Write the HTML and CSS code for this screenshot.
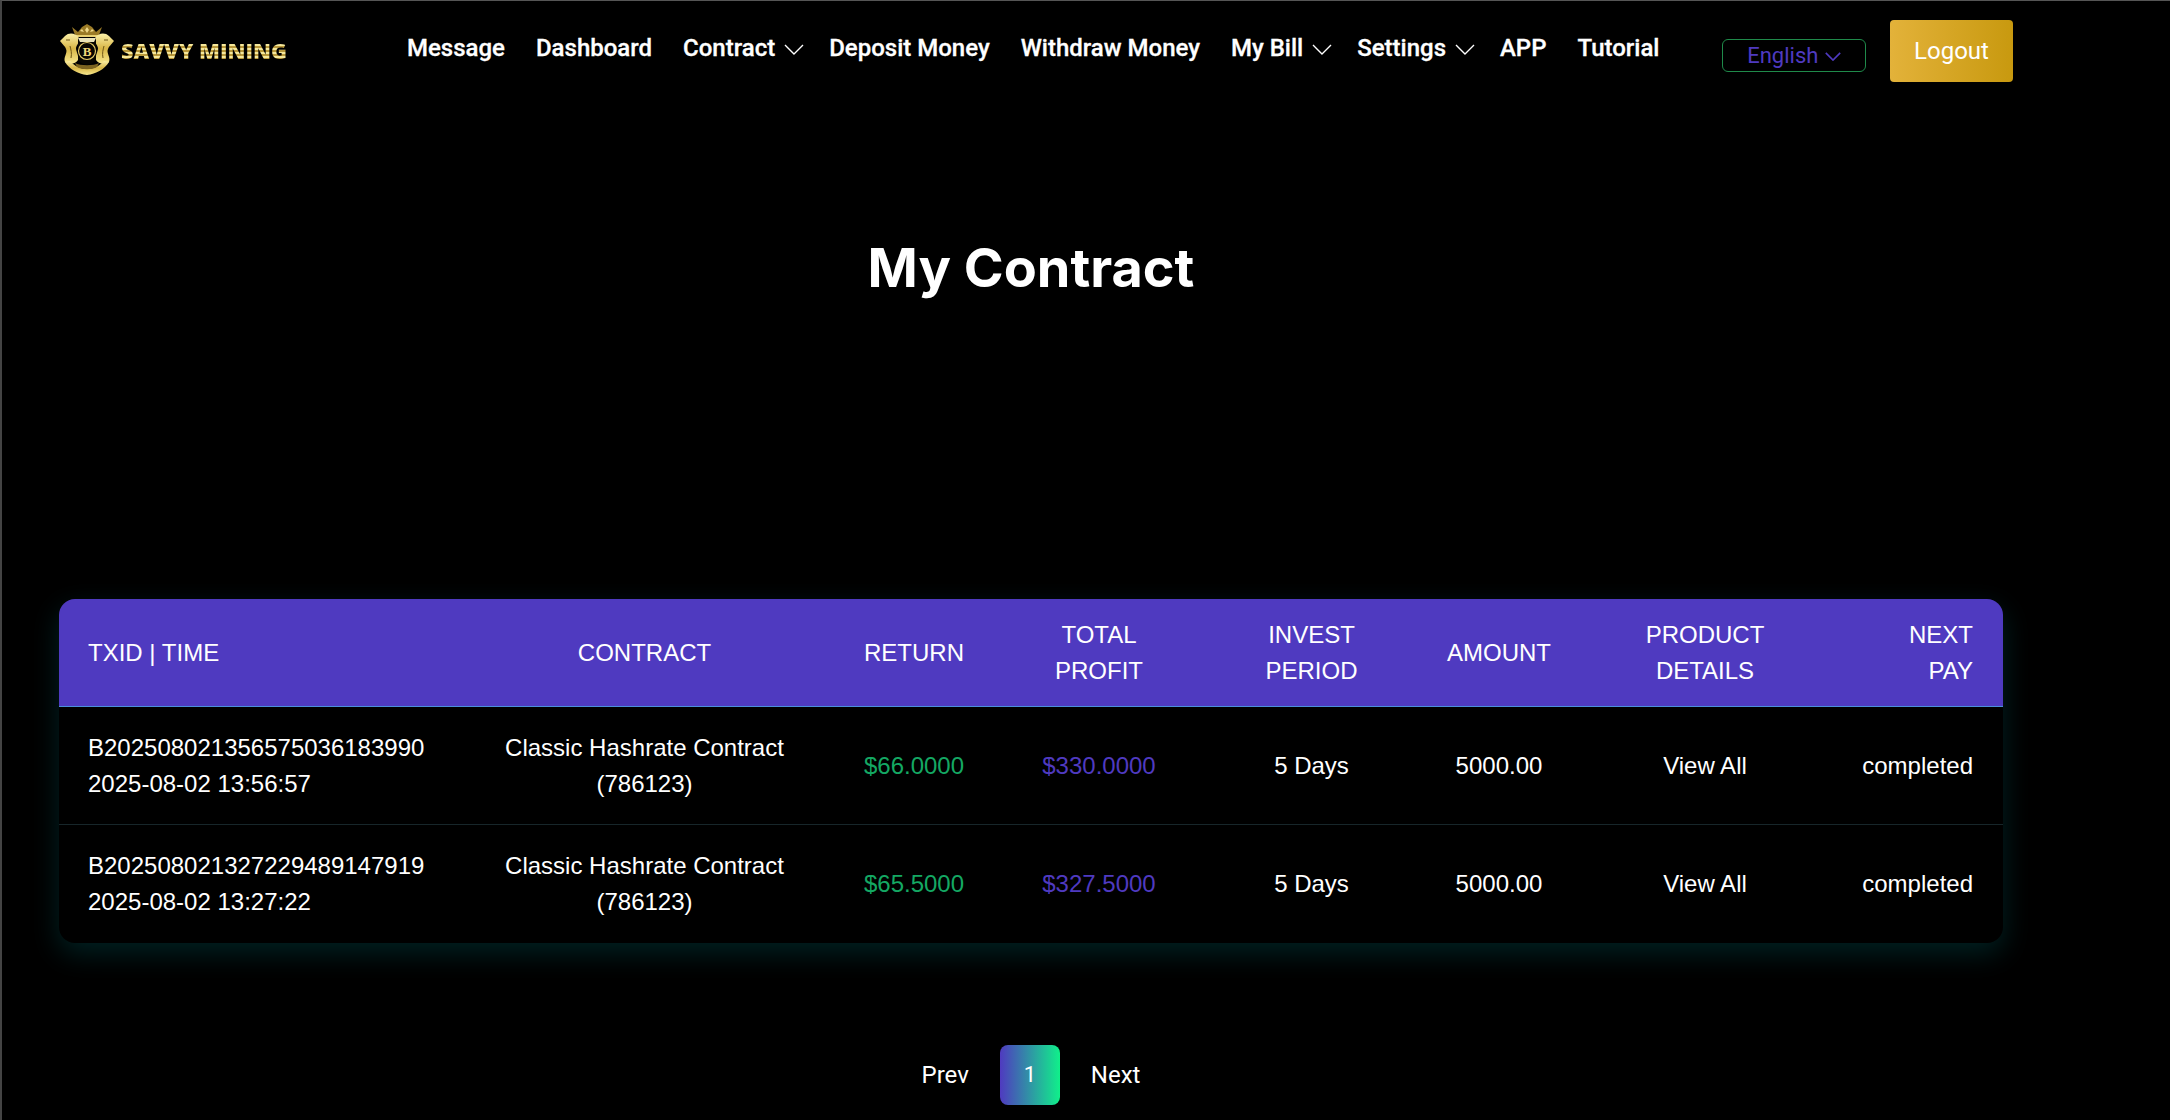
FILE: index.html
```html
<!DOCTYPE html>
<html lang="en">
<head>
    <meta charset="UTF-8">
    <meta name="viewport" content="width=device-width, initial-scale=1.0">
    <title>My Contract</title>
    <link rel="stylesheet" href="styles.css">
</head>
<body>
    <div class="page">
        <header class="header">
            <a class="logo" href="#">
                <svg class="logo-crest" viewBox="0 0 54 52" aria-hidden="true">
                    <defs>
                        <linearGradient id="gold" x1="0" y1="0" x2="0" y2="1">
                            <stop offset="0" stop-color="#fbf0a8"/>
                            <stop offset="0.5" stop-color="#d8b646"/>
                            <stop offset="1" stop-color="#f8e88e"/>
                        </linearGradient>
                    </defs>
                    <!-- crown -->
                    <path d="M12 3 L18 8 L22 3 L27 0 L32 3 L36 8 L42 3 L39 11 L15 11 Z" fill="#9a7a26"/>
                    <path d="M20 7 L22 5 L24 8 Z M30 8 L32 5 L34 7 Z M25 6 L27 3 L29 6 L27 9 Z" fill="#efd98a"/>
                    <path d="M15 11 H39 V13 H15 Z" fill="#e8cf70"/>
                    <!-- lions -->
                    <path d="M0 17 L5 12 C9 8 16 9 19 14 C20 18 17 20 16 24 C16 28 19 31 18 36 C16 40 9 41 5 38 C3 33 8 29 6 25 C5 22 3 21 0 17 Z" fill="url(#gold)"/>
                    <path d="M54 17 L49 12 C45 8 38 9 35 14 C34 18 37 20 38 24 C38 28 35 31 36 36 C38 40 45 41 49 38 C51 33 46 29 48 25 C49 22 51 21 54 17 Z" fill="url(#gold)"/>
                    <path d="M6 16 H10 M44 16 H48 M10 22 C11 26 12 29 11 34 M44 22 C43 26 42 29 43 34" fill="none" stroke="#6d5516" stroke-width="1"/>
                    <!-- shield and coin -->
                    <path d="M18 14 H36 V34 C36 38 31 40 27 41 C23 40 18 38 18 34 Z" fill="#080601"/>
                    <path d="M18 14 H36 L34 18 H20 Z" fill="#e9e2b8"/>
                    <circle cx="27" cy="27" r="8.5" fill="none" stroke="#e3c765" stroke-width="1.2"/>
                    <text class="crest-letter" x="27" y="31.5" text-anchor="middle">B</text>
                    <!-- ribbon -->
                    <path d="M5 38 C9 45 18 50 27 51 C36 50 45 45 49 38 L44 37 C40 42 33 45 27 45 C21 45 14 42 10 37 Z" fill="url(#gold)"/>
                    <path d="M15 39 C20 42 34 42 39 39 L37 43 C32 46 22 46 17 43 Z" fill="#7d6420"/>
                </svg>
                <span class="logo-text">SAVVY MINING</span>
            </a>
            <nav class="nav">
                <a href="#">Message</a>
                <a href="#">Dashboard</a>
                <a href="#" class="has-menu">Contract <svg class="chev" viewBox="0 0 20 11"><path d="M1 1 L10 10 L19 1"/></svg></a>
                <a href="#">Deposit Money</a>
                <a href="#">Withdraw Money</a>
                <a href="#" class="has-menu">My Bill <svg class="chev" viewBox="0 0 20 11"><path d="M1 1 L10 10 L19 1"/></svg></a>
                <a href="#" class="has-menu">Settings <svg class="chev" viewBox="0 0 20 11"><path d="M1 1 L10 10 L19 1"/></svg></a>
                <a href="#">APP</a>
                <a href="#">Tutorial</a>
            </nav>
            <div class="lang">English <svg class="chev chev-small" viewBox="0 0 20 11"><path d="M1 1 L10 10 L19 1"/></svg></div>
            <button class="logout">Logout</button>
        </header>

        <main class="content">
            <h1 class="title">My Contract</h1>

            <div class="table-card">
                <table class="contract-table">
                    <thead>
                        <tr>
                            <th class="col-id">TXID | TIME</th>
                            <th class="col-contract">CONTRACT</th>
                            <th class="col-return">RETURN</th>
                            <th class="col-profit">TOTAL<br>PROFIT</th>
                            <th class="col-period">INVEST<br>PERIOD</th>
                            <th class="col-amount">AMOUNT</th>
                            <th class="col-details">PRODUCT<br>DETAILS</th>
                            <th class="col-next">NEXT<br>PAY</th>
                        </tr>
                    </thead>
                    <tbody>
                        <tr>
                            <td class="col-id">B202508021356575036183990<br>2025-08-02 13:56:57</td>
                            <td class="col-contract">Classic Hashrate Contract<br>(786123)</td>
                            <td class="col-return green">$66.0000</td>
                            <td class="col-profit purple">$330.0000</td>
                            <td class="col-period">5 Days</td>
                            <td class="col-amount">5000.00</td>
                            <td class="col-details">View All</td>
                            <td class="col-next">completed</td>
                        </tr>
                        <tr>
                            <td class="col-id">B202508021327229489147919<br>2025-08-02 13:27:22</td>
                            <td class="col-contract">Classic Hashrate Contract<br>(786123)</td>
                            <td class="col-return green">$65.5000</td>
                            <td class="col-profit purple">$327.5000</td>
                            <td class="col-period">5 Days</td>
                            <td class="col-amount">5000.00</td>
                            <td class="col-details">View All</td>
                            <td class="col-next">completed</td>
                        </tr>
                    </tbody>
                </table>
            </div>

            <div class="pagination">
                <a href="#">Prev</a>
                <span class="page-num">1</span>
                <a href="#">Next</a>
            </div>
        </main>
    </div>
</body>
</html>
```

FILE: styles.css
```css
html, body {
    margin: 0;
    padding: 0;
    height: 100%;
    background: #000;
    overflow: hidden;
}
body {
    font-family: "Liberation Sans", Arial, sans-serif;
    color: #fff;
}
a {
    color: #fff;
    text-decoration: none;
}
.page {
    height: 100%;
    box-sizing: border-box;
    border-top: 1px solid #555;
    border-left: 2px solid #444;
}

/* header */
.header {
    display: flex;
    align-items: flex-start;
    height: 96px;
    padding-left: 58px;
}
.logo {
    display: flex;
    align-items: center;
    gap: 7px;
    margin-top: 23px;
    width: 347px;
}
.logo-crest {
    width: 54px;
    height: 52px;
}
.crest-letter {
    font-family: "Liberation Serif", serif;
    font-weight: bold;
    font-size: 13px;
    fill: #f0d878;
}
.logo-text {
    font-family: "Open Sans", sans-serif;
    font-weight: 800;
    font-size: 21.6px;
    background: repeating-linear-gradient(180deg, #f6e89a 0, #f6e89a 2px, #b9983a 2px, #b9983a 4px);
    -webkit-background-clip: text;
    background-clip: text;
    color: transparent;
}
.nav {
    display: flex;
    gap: 31px;
    margin-top: 31px;
    font-family: Roboto, sans-serif;
    font-weight: 500;
    font-size: 24px;
    line-height: 32px;
    width: 1316px;
}
.nav a {
    white-space: nowrap;
    -webkit-text-stroke: 0.3px #fff;
}
.nav .has-menu {
    margin-right: -6px;
}
.chev {
    width: 20px;
    height: 11px;
    margin-left: 3px;
    vertical-align: 1px;
}
.chev path {
    fill: none;
    stroke: #fff;
    stroke-width: 1.4;
}
.lang {
    box-sizing: border-box;
    width: 144px;
    height: 33px;
    margin-top: 38px;
    margin-left: -1px;
    border: 1px solid #1f8a4a;
    border-radius: 6px;
    color: #4f3ac0;
    font-family: Roboto, sans-serif;
    font-size: 22px;
    line-height: 31px;
    text-align: center;
}
.chev-small {
    width: 16px;
    height: 9px;
    margin-left: 1px;
    vertical-align: 2px;
}
.chev-small path {
    stroke: #4f3ac0;
    stroke-width: 2;
}
.logout {
    width: 123px;
    height: 62px;
    margin-top: 19px;
    margin-left: 24px;
    border: none;
    border-radius: 4px;
    background: linear-gradient(90deg, #e3b23a, #c8990f);
    color: #fff;
    font-family: Roboto, sans-serif;
    font-size: 24px;
}

/* main */
.content {
    width: 1944px;
    margin-left: 57px;
}
.title {
    margin: 0;
    padding-top: 138px;
    height: 502px;
    box-sizing: border-box;
    font-family: Inter, sans-serif;
    font-size: 54px;
    line-height: 66px;
    font-weight: 700;
    text-align: center;
}
.table-card {
    border-radius: 16px;
    background: #000;
    box-shadow: 0 10px 28px rgba(0, 200, 210, 0.17);
    overflow: hidden;
}
.contract-table {
    width: 100%;
    border-collapse: separate;
    border-spacing: 0;
    table-layout: fixed;
    font-size: 24px;
    line-height: 36px;
}
.contract-table th {
    height: 107px;
    padding: 0;
    background: #4f3ac0;
    border-bottom: 1px solid #4a8fdc;
    font-weight: 400;
    text-align: center;
}
.contract-table td {
    height: 117px;
    padding: 0;
    text-align: center;
    border-bottom: 1px solid #17262a;
}
.contract-table tbody tr:last-child td {
    height: 118px;
    border-bottom: none;
}
.contract-table .col-id {
    width: 415px;
    padding-left: 29px;
    box-sizing: border-box;
    text-align: left;
}
.contract-table .col-next {
    padding-right: 30px;
    box-sizing: border-box;
    text-align: right;
}
.col-contract { width: 341px; }
.col-return { width: 198px; }
.col-profit { width: 172px; }
.col-period { width: 253px; }
.col-amount { width: 122px; }
.col-details { width: 290px; }
.green { color: #14a863; }
.purple { color: #4f3ac0; }

/* pagination */
.pagination {
    display: flex;
    justify-content: center;
    align-items: center;
    gap: 31px;
    margin-top: 102px;
    font-family: Roboto, sans-serif;
    font-size: 24px;
}
.page-num {
    width: 60px;
    height: 60px;
    border-radius: 8px;
    background: linear-gradient(90deg, #4f3ac0, #10f08a);
    font-size: 22px;
    line-height: 60px;
    text-align: center;
}
```
